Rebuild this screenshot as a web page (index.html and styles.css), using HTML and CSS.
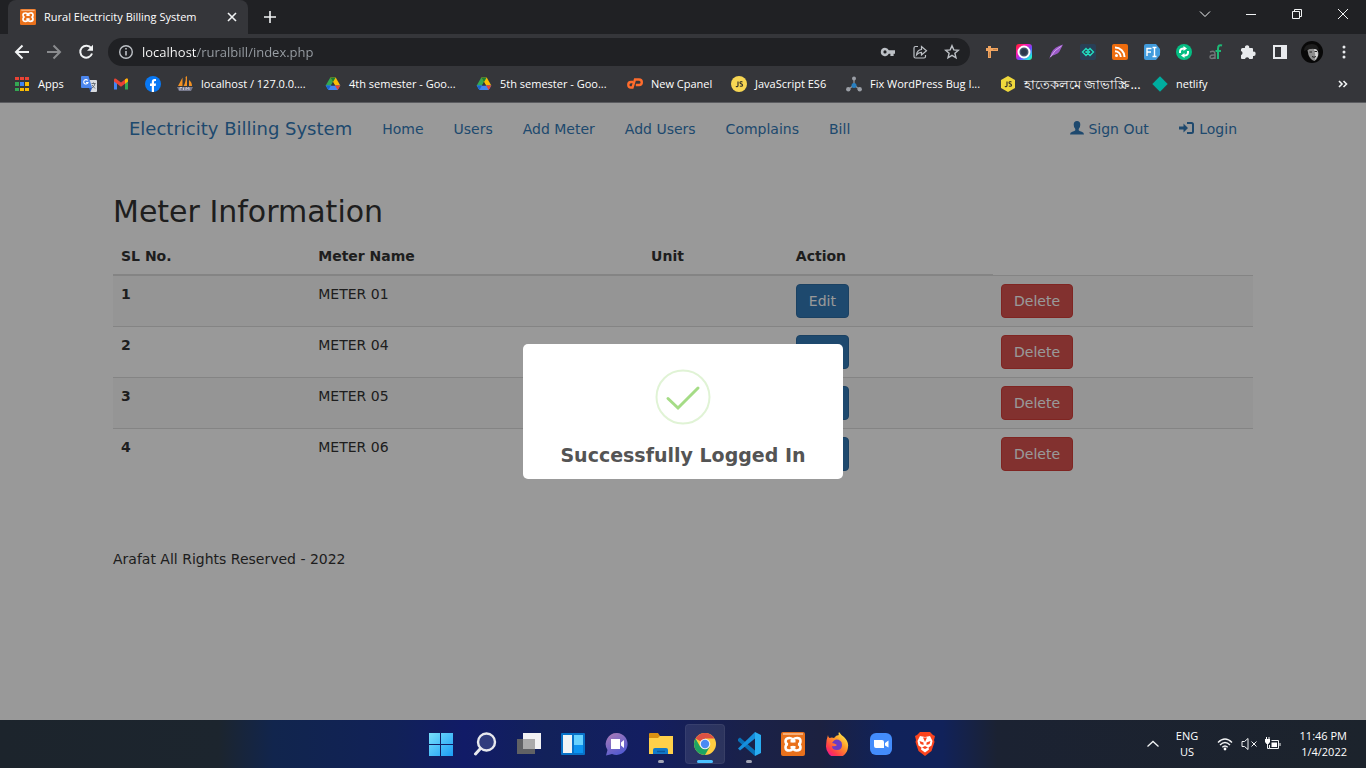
FILE: index.html
```html
<!DOCTYPE html>
<html lang="en">
<head>
<meta charset="utf-8">
<meta name="viewport" content="width=device-width, initial-scale=1">
<title>Rural Electricity Billing System</title>
<link rel="stylesheet" href="styles.css">
</head>
<body>
<svg class="sprite" aria-hidden="true">
  <symbol id="xampp" viewBox="0 0 24 24">
    <rect width="24" height="24" rx="2" fill="#e9711c"/><path d="M2 1h20v2H2z" fill="#f5ad78"/>
    <path d="M12 8q-1-2-3.500-2Q4.500 6 4.500 9T7 12.300q-2.500 0-2.500 3.200t4 3q2.500 0 3.500-2.200 1 2.200 3.500 2.200 4 0 4-3T17 12.300q2.500 0 2.500-3.300t-4-3Q13 6 12 8z" fill="none" stroke="#fff" stroke-width="2.600"/>
    <path d="M9.500 8v2.500h5V8M9.500 16.500V14h5v2.500" fill="#fff"/>
  </symbol>
  <symbol id="drive" viewBox="0 0 16 16">
    <path d="M5.300 1.500 8 6.100 3.400 14 .7 9.500z" fill="#34a853"/>
    <path d="M10.700 1.500 15.300 9.500H10L5.300 1.500z" fill="#fbbc04"/><path d="M5.300 1.500h5.400L8 6.100z" fill="#188038"/>
    <path d="M.7 9.500h14.600L12.700 14H3.400z" fill="#4285f4"/><path d="M.7 9.500H6L3.400 14z" fill="#1967d2"/><path d="M10 9.500h5.300L12.700 14z" fill="#ea4335"/>
    <path d="m8 6.100 2 3.400H6z" fill="#35363a"/>
  </symbol>
</svg>

<div class="screen">
  <header class="browser">
    <div class="tabstrip">
      <div class="tab">
        <svg class="icon16"><use href="#xampp"/></svg>
        <span class="tab-title">Rural Electricity Billing System</span>
        <button class="tab-close" aria-label="Close tab"><svg width="10" height="10" viewBox="0 0 10 10" class="line"><path d="m1 1 8 8M9 1 1 9" stroke-width="1.600"/></svg></button>
      </div>
      <button class="tool" aria-label="New tab"><svg width="14" height="14" viewBox="0 0 14 14" class="line"><path d="M7 1v12M1 7h12" stroke-width="1.600"/></svg></button>
      <div class="window-controls">
        <button aria-label="Search tabs"><svg width="12" height="12" viewBox="0 0 12 12" class="line"><path d="m1 3.500 5 5 5-5"/></svg></button>
        <button aria-label="Minimize"><svg width="12" height="12" viewBox="0 0 12 12" class="line"><path d="M1 6.500h10"/></svg></button>
        <button aria-label="Restore"><svg width="12" height="12" viewBox="0 0 12 12" class="line"><path d="M1.500 3.500h7v7h-7zM3.500 3.500v-2h7v7h-2"/></svg></button>
        <button aria-label="Close"><svg width="12" height="12" viewBox="0 0 12 12" class="line"><path d="m1 1 10 10M11 1 1 11"/></svg></button>
      </div>
    </div>

    <div class="toolbar">
      <button class="tool" aria-label="Back"><svg width="16" height="16" viewBox="0 0 16 16" class="line bold"><path d="M15 8H2M8.500 1.500 2 8l6.500 6.500"/></svg></button>
      <button class="tool dim" aria-label="Forward"><svg width="16" height="16" viewBox="0 0 16 16" class="line bold"><path d="M1 8h13M7.500 1.500 14 8l-6.500 6.500"/></svg></button>
      <button class="tool" aria-label="Reload"><svg width="16" height="16" viewBox="0 0 16 16" class="line bold"><path d="M13.200 4.200A6 6 0 1 0 14 9.500"/><path d="M15 .8v6H9z" fill="#f1f3f4" stroke="none"/></svg></button>
      <div class="omnibox">
        <svg width="16" height="16" viewBox="0 0 16 16" class="line muted"><circle cx="8" cy="8" r="6.300" stroke-width="1.400"/><path d="M8 7v4.500M8 4v1.600" stroke-width="1.600"/></svg>
        <input class="address" type="text" value="localhost/ruralbill/index.php" aria-label="Address">
        <button class="tool" aria-label="Passwords"><svg width="16" height="16" viewBox="0 0 16 16"><path fill="#bdc1c6" fill-rule="evenodd" d="M5 3.700a4.200 4.200 0 0 1 3.800 2.500H15v3.500h-1.400V12h-3.200V9.700H8.800A4.200 4.200 0 1 1 5 3.700zm0 2.600a1.600 1.600 0 1 0 0 3.200 1.600 1.600 0 0 0 0-3.200z"/></svg></button>
        <button class="tool" aria-label="Share"><svg width="16" height="16" viewBox="0 0 16 16" class="line muted"><path d="M6 2.500H3.500Q2 2.500 2 4v8.500Q2 14 3.500 14h8.500q1.500 0 1.500-1.500V11M4.500 11q.5-5 5-5.500V2.500l5 4.300-5 4.200V8.300Q6.500 8.300 4.500 11z" stroke-width="1.200"/></svg></button>
        <button class="tool" aria-label="Bookmark"><svg width="16" height="16" viewBox="0 0 16 16" class="line muted"><path d="m8 1.700 1.800 4.200 4.600.4-3.500 3 1.100 4.500L8 11.400l-4 2.400 1.100-4.500-3.500-3 4.600-.4z" stroke-width="1.400"/></svg></button>
      </div>
      <button class="tool" aria-label="Page ruler"><svg width="16" height="16" viewBox="0 0 16 16"><path d="M2 4h12v3H7v7H4V7H2z" fill="#f0a561"/><path d="M4 2h3v2H4z" fill="#f0a561"/><path d="M9 5.500h4M5.500 8v5" stroke="#c98448"/></svg></button>
      <button class="tool" aria-label="Screen capture"><svg width="16" height="16" viewBox="0 0 16 16"><defs><linearGradient id="cap" x1="0" y1="0" x2="1" y2="1"><stop offset="0" stop-color="#f22"/><stop offset=".35" stop-color="#ff15b5"/><stop offset=".6" stop-color="#6a4bff"/><stop offset=".85" stop-color="#1de6e0"/><stop offset="1" stop-color="#52e072"/></linearGradient></defs><rect width="16" height="16" rx="3" fill="url(#cap)"/><circle cx="8" cy="8" r="5.500" fill="#42526a" stroke="#fff" stroke-width="2"/><circle cx="8" cy="8" r="3" fill="#2b384b"/></svg></button>
      <button class="tool" aria-label="Feather"><svg width="16" height="16" viewBox="0 0 16 16"><path d="M15 .5Q6 3 3.500 8.500L1.200 15l2.300-3Q11 10 12.500 5.500z" fill="#9b59c7"/><path d="M13.500 2Q6 6 2.500 13" stroke="#d3a8ee" fill="none"/></svg></button>
      <button class="tool" aria-label="Code inspector"><svg width="16" height="16" viewBox="0 0 16 16"><rect width="16" height="16" rx="2" fill="#293f55"/><path d="m6 4.500-3.500 3.500L6 11.500 9.500 8zM10 4.500 6.500 8l3.500 3.500L13.500 8z" fill="none" stroke="#22dfc0" stroke-width="1.300"/><path d="M5 8h6" stroke="#22dfc0" stroke-dasharray="2 1"/></svg></button>
      <button class="tool" aria-label="RSS"><svg width="16" height="16" viewBox="0 0 16 16"><rect width="16" height="16" rx="2" fill="#ee6c0d"/><circle cx="4.500" cy="11.500" r="1.500" fill="#fff"/><path d="M3 7.200a5.800 5.800 0 0 1 5.800 5.800M3 3.500A9.500 9.500 0 0 1 12.500 13" fill="none" stroke="#fff" stroke-width="2"/></svg></button>
      <button class="tool" aria-label="Font finder"><svg width="16" height="16" viewBox="0 0 16 16"><path d="M2 0h10l4 5v6l-4 5H2q-2 0-2-2V2q0-2 2-2z" fill="#419bdc"/><path d="M3 12V4.500h4.500M3 8h4M8.500 3.500h4M8.500 12.500h4M10.500 3.500v9" fill="none" stroke="#fff" stroke-width="1.400"/></svg></button>
      <button class="tool" aria-label="Sync"><svg width="16" height="16" viewBox="0 0 16 16"><circle cx="8" cy="8" r="8" fill="#05bd83"/><path d="M4 9V7.500q0-3 4-3M12 7v1.500q0 3-4 3" fill="none" stroke="#fff" stroke-width="2"/><path d="M7.500 2v5L11 4.500zM8.500 14V9L5 11.500z" fill="#fff"/></svg></button>
      <button class="tool" aria-label="Autofill"><svg width="16" height="16" viewBox="0 0 16 16" fill="none"><path d="M2 8q5-2 5 2v5M7 11q-5-.5-5 2t5 .5" stroke="#737679" stroke-width="1.500"/><path d="M14 1.500q-4-1.500-4 3.500v10M7.500 7H13" stroke="#1eb976" stroke-width="2"/></svg></button>
      <button class="tool" aria-label="Extensions"><svg width="16" height="16" viewBox="0 0 16 16"><path fill="#e8eaed" d="M2.500 4H5a2.200 2.200 0 1 1 4.200 0H12q1 0 1 1v2.700a2.200 2.200 0 1 1 0 4.300v2q0 1-1 1H9.300a2.200 2.200 0 0 0-4.300 0H2q-1 0-1-1v-2.800a2.200 2.200 0 0 0 0-4.200V5.500Q1 4 2.500 4z"/></svg></button>
      <button class="tool" aria-label="Side panel"><svg width="16" height="16" viewBox="0 0 16 16"><path fill="#e8eaed" fill-rule="evenodd" d="M1 1h14v14H1zm2 2v10h6V3z"/></svg></button>
      <button class="tool" aria-label="Profile"><svg width="22" height="22" viewBox="0 0 22 22"><circle cx="11" cy="11" r="11" fill="#080808"/><path d="M6.500 9q4-3 9.500-.5l1.500 3.500q0 5-4 8-4-1-6-6z" fill="#8d8d8d"/><path d="M13 8q3 0 3.500 2l.5 4.500-3 4.500q1-6-1-11z" fill="#d2d2d2"/><path d="M3 10q0-7 8-7 6 0 7 6-8-3-15 1z" fill="#1d1d1d"/><path d="M8.500 11h2.500M13.500 10.500H16M11 15.500q2 1.500 4 0" stroke="#202020" fill="none"/></svg></button>
      <button class="tool" aria-label="Menu"><svg width="16" height="16" viewBox="0 0 16 16" fill="#e8eaed"><circle cx="8" cy="3" r="1.500"/><circle cx="8" cy="8" r="1.500"/><circle cx="8" cy="13" r="1.500"/></svg></button>
    </div>

    <nav class="bookmarks" aria-label="Bookmarks">
      <a href="#"><svg class="icon16" viewBox="0 0 16 16"><path d="M1 1h4v3H1zM6 1h4v3H6zM11 1h4v3h-4z" fill="#ea4335"/><path d="M1 6h4v4H1z" fill="#34a853"/><path d="M6 6h4v4H6z" fill="#4285f4"/><path d="M11 6h4v4h-4z" fill="#fbbc04"/><path d="M1 12h4v3H1z" fill="#34a853"/><path d="M6 12h4v3H6zM11 12h4v3h-4z" fill="#fbbc04"/></svg><span>Apps</span></a>
      <a href="#" aria-label="Translate"><svg class="icon16" viewBox="0 0 16 16"><path d="M7 4h8q1 0 1 1v10q0 1-1 1H9.500z" fill="#d9dce0"/><path d="M1 0h6.500l3.700 12H1q-1 0-1-1V1q0-1 1-1z" fill="#4c86ed"/><path d="m8 12 3 0-1.500 4z" fill="#2956b2"/><path d="M6.700 4.500A2.200 2.200 0 1 0 7 6.500H5" stroke="#fff" fill="none" stroke-width="1.100"/><path d="M10.500 7.500h4M12.500 6.500v1M14 7.500q-.5 3-3 4.500M11 9l3 3.500" stroke="#697078" fill="none"/></svg></a>
      <a href="#" aria-label="Gmail"><svg class="icon16" viewBox="0 0 16 16"><path d="M1 4v9.500h3V6z" fill="#4285f4"/><path d="M12 6v7.500h3V4z" fill="#34a853"/><path d="M1 5.500V4q0-2 2-1.300L8 6.500l5-3.800Q15 2 15 4v1.500l-7 5.200z" fill="#ea4335"/><path d="M12 3.500 13 2.700Q15 2 15 4v1.500l-3 2.200z" fill="#fbbc04"/></svg></a>
      <a href="#" aria-label="Facebook"><svg class="icon16" viewBox="0 0 16 16"><circle cx="8" cy="8" r="8" fill="#0878f4"/><path d="M6.800 16V10H5V7.500h1.800V6Q6.800 3 9.500 3H11v2H9.800Q9 5 9 6.200v1.300h2L10.700 10H9v6z" fill="#fff"/></svg></a>
      <a href="#"><svg class="icon16" viewBox="0 0 16 16"><path d="M5.500 1.500V10H1zM10 0v10H6.500Q9.500 5 8.500 1zM12 4q3 2 3 6h-3z" fill="#f29122"/><path d="M0 11h16l-2 4H2z" fill="#77798c"/><path d="M3 14v-2.500h2M6.500 11.500V14M9 14v-2.500l1.500 1 1.500-1V14" fill="none" stroke="#d6d6df" stroke-width=".8"/></svg><span>localhost / 127.0.0....</span></a>
      <a href="#"><svg class="icon16"><use href="#drive"/></svg><span>4th semester - Goo...</span></a>
      <a href="#"><svg class="icon16"><use href="#drive"/></svg><span>5th semester - Goo...</span></a>
      <a href="#"><svg class="icon16" viewBox="0 0 16 16" fill="none" stroke="#ff6c2c" stroke-width="2.400"><path d="M6 6H4Q1.300 6 1.300 8.800T4 11.500H5.500L8 3.500h4q2.800 0 2.800 2.700T12 9H8.800"/></svg><span>New Cpanel</span></a>
      <a href="#"><svg class="icon16" viewBox="0 0 16 16"><circle cx="8" cy="8" r="8" fill="#f7d653"/><path d="M7 5.500v4q0 1.500-2.200 1M11.500 6q-2.500-.8-2.500.7 0 .8 1.300 1.200 1.200.4 1.200 1.300 0 1.600-2.700.8" fill="none" stroke="#38352a" stroke-width="1.200"/></svg><span>JavaScript ES6</span></a>
      <a href="#"><svg class="icon16" viewBox="0 0 16 16"><path d="M8 3v6M8 9l-5 4M8 9l5 4" stroke="#8e9299" stroke-width="1.300"/><g fill="#9b9fa6"><circle cx="8" cy="2.500" r="2"/><circle cx="2.300" cy="13.200" r="2.200"/><circle cx="13.700" cy="13.200" r="2.200"/></g><circle cx="8" cy="9.500" r="2.500" fill="#287fc0"/></svg><span>Fix WordPress Bug I...</span></a>
      <a href="#"><svg class="icon16" viewBox="0 0 16 16"><path d="m8 0 7 4v8l-7 4-7-4V4z" fill="#efd83c"/><path d="M7 5.500v4q0 1.500-2.200 1M11.500 6q-2.500-.8-2.500.7 0 .8 1.300 1.200 1.200.4 1.200 1.300 0 1.600-2.700.8" fill="none" stroke="#38352a" stroke-width="1.200"/></svg><span class="bengali" lang="bn">হাতেকলমে জাভাস্ক্রি...</span></a>
      <a href="#"><svg class="icon16" viewBox="0 0 16 16"><path d="m8 .3 7.700 7.700L8 15.700.3 8z" fill="#00ad9f"/></svg><span>netlify</span></a>
      <button class="tool more" aria-label="More bookmarks"><svg width="10" height="8" viewBox="0 0 10 8" class="line"><path d="m1 1 3 3-3 3M5.500 1l3 3-3 3" stroke-width="1.600"/></svg></button>
    </nav>
  </header>

  <main class="page">
    <div class="container">
      <nav class="navbar">
        <a class="brand" href="#">Electricity Billing System</a>
        <a href="#">Home</a><a href="#">Users</a><a href="#">Add Meter</a><a href="#">Add Users</a><a href="#">Complains</a><a href="#">Bill</a>
        <a class="push" href="#"><svg width="14" height="14" viewBox="0 0 14 14" fill="currentColor"><path d="M7 0q3.300 0 3.300 3.700 0 2.800-1.600 4.300v1.300q.3.700 3 1.500Q14 11.500 14 13.500H0Q0 11.500 2.300 10.800q2.700-.8 3-1.500V8Q3.700 6.500 3.700 3.700 3.700 0 7 0z"/></svg> Sign Out</a>
        <a href="#"><svg width="16" height="14" viewBox="0 0 16 14"><path d="M0 5.500h4.500V2.500L9 7 4.500 11.500V8.500H0z" fill="currentColor"/><path d="M8 2h4.500q1.500 0 1.500 1.500v7q0 1.500-1.500 1.500H8" fill="none" stroke="currentColor" stroke-width="2"/></svg> Login</a>
      </nav>

      <h2>Meter Information</h2>
      <table class="meters">
        <colgroup><col class="c-sl"><col class="c-name"><col class="c-unit"><col class="c-edit"><col class="c-del"></colgroup>
        <thead><tr><th>SL No.</th><th>Meter Name</th><th>Unit</th><th>Action</th></tr></thead>
        <tbody>
          <tr><th scope="row">1</th><td>METER 01</td><td></td><td><button class="btn edit">Edit</button></td><td><button class="btn delete">Delete</button></td></tr>
          <tr><th scope="row">2</th><td>METER 04</td><td></td><td><button class="btn edit">Edit</button></td><td><button class="btn delete">Delete</button></td></tr>
          <tr><th scope="row">3</th><td>METER 05</td><td></td><td><button class="btn edit">Edit</button></td><td><button class="btn delete">Delete</button></td></tr>
          <tr><th scope="row">4</th><td>METER 06</td><td></td><td><button class="btn edit">Edit</button></td><td><button class="btn delete">Delete</button></td></tr>
        </tbody>
      </table>
      <footer class="copyright">Arafat All Rights Reserved - 2022</footer>
    </div>

    <div class="overlay">
      <div class="modal" role="dialog" aria-labelledby="modal-title">
        <svg width="56" height="56" viewBox="0 0 56 56" fill="none" stroke="#a5dc86"><circle cx="28" cy="28" r="26.500" stroke-width="2" stroke-opacity=".35"/><path d="m13 29.500 10 9.500 20-20" stroke-width="3" stroke-linecap="round"/></svg>
        <h3 id="modal-title">Successfully Logged In</h3>
      </div>
    </div>
  </main>

  <footer class="taskbar">
    <div class="apps">
      <button aria-label="Start"><svg width="24" height="24" viewBox="0 0 24 24"><defs><linearGradient id="win" x1="0" y1="0" x2="1" y2="1"><stop offset="0" stop-color="#79e0fb"/><stop offset="1" stop-color="#1b9df5"/></linearGradient></defs><path d="M0 1h11v11H0zM12 1h12v11H12zM0 13h11v11H0zM12 13h12v11H12z" fill="url(#win)"/></svg></button>
      <button aria-label="Search"><svg width="24" height="24" viewBox="0 0 24 24"><circle cx="13.500" cy="10" r="8.500" fill="#303c7d" stroke="#e8e9ee" stroke-width="2.400"/><path d="m7.500 16.500-5 5.500" stroke="#e8e9ee" stroke-width="3" stroke-linecap="round"/></svg></button>
      <button aria-label="Task view"><svg width="24" height="24" viewBox="0 0 24 24"><path d="M6 1h18v16H6z" fill="#f2f2f3"/><path d="M0 7h18v15H0z" fill="#606164"/><path d="M6 7h12v10H6z" fill="#aaa"/></svg></button>
      <button aria-label="Widgets"><svg width="24" height="24" viewBox="0 0 24 24"><rect y="1" width="24" height="22" rx="1" fill="#0872c8"/><path d="M2 3h9v18H2z" fill="#f0f3f5"/><path d="M13 3h9v10h-9z" fill="#67d2ff"/><path d="M13 13h9v8h-9z" fill="#0b94f1"/></svg></button>
      <button aria-label="Chat"><svg width="24" height="24" viewBox="0 0 24 24"><defs><linearGradient id="chat" x1="0" y1="0" x2=".5" y2="1"><stop offset="0" stop-color="#ae7db5"/><stop offset="1" stop-color="#555bd0"/></linearGradient></defs><path d="M12 1a11 11 0 1 1-5 21L1 23.500 2.500 18A11 11 0 0 1 12 1z" fill="url(#chat)"/><path d="M6 7h9v10H6zM16 10.500l3-2.500v8l-3-2.500z" fill="#fff"/></svg></button>
      <button class="running" aria-label="File Explorer"><svg width="24" height="24" viewBox="0 0 24 24"><path d="M1 1h8l2 3H24v9H0V2q0-1 1-1z" fill="#d99012"/><path d="M0 6h9l2-2h13v18H0z" fill="#ffd04a"/><path d="M4 22v-4q0-2 2-2h11q2 0 2 2v4z" fill="#1179ca"/><path d="M8 19.500h8" stroke="#0b579d" stroke-width="1.500"/></svg></button>
      <button class="active" aria-label="Chrome"><svg width="24" height="24" viewBox="0 0 24 24"><circle cx="12" cy="12" r="11" fill="#ffcd40"/><path d="M12 12 2.500 6.500A11 11 0 0 1 21.500 6.500H12z" fill="#dd5144"/><path d="M2.500 6.500a11 11 0 0 0 9.500 16.500l4.800-8.300L12 12l-4.800 2.700z" fill="#1da462"/><circle cx="12" cy="12" r="5.300" fill="#f1f1f1"/><circle cx="12" cy="12" r="4.200" fill="#4a8af4"/></svg></button>
      <button class="running" aria-label="Visual Studio Code"><svg width="24" height="24" viewBox="0 0 24 24"><path d="m1 7 2-1.500 15 13V24L1 9z" fill="#0871b8"/><path d="M1 16.500 18 0v6.500L3 18.500z" fill="#168fdd"/><path d="m18 0 6 3v18l-6 3z" fill="#29adf2"/></svg></button>
      <button aria-label="XAMPP"><svg width="24" height="24"><use href="#xampp"/></svg></button>
      <button aria-label="Firefox"><svg width="24" height="24" viewBox="0 0 24 24"><defs><linearGradient id="fox" x1="1" y1="0" x2=".2" y2="1"><stop offset=".1" stop-color="#fff44f"/><stop offset=".45" stop-color="#ff9728"/><stop offset=".8" stop-color="#ff3b4b"/><stop offset="1" stop-color="#ef1499"/></linearGradient></defs><path d="M3 3q0 2 1.500 3Q7 5 9 6q2-3 5-3-1-1 0-3 2 3 5 5 5 5 4 10a11 11 0 0 1-22-1Q1 8 3 3z" fill="url(#fox)"/><path d="M11 7.500q6 0 6 5.500 0 5-5 5-5 0-5-4 3 1 5-1-3-2-5-2 2-3.500 4-3.500z" fill="#6b3bc4"/></svg></button>
      <button aria-label="Zoom"><svg width="24" height="24" viewBox="0 0 24 24"><rect x="1" y="1" width="22" height="22" rx="6" fill="#438cfb"/><path d="M5 8h8q2 0 2 2v6H7q-2 0-2-2zM16 11l3.500-2.500v7L16 13.500z" fill="#fff"/></svg></button>
      <button aria-label="Brave"><svg width="24" height="24" viewBox="0 0 24 24"><path d="M7 0h10l3 3 2 1-1 4 .5 2-3 9-6.500 5-6.500-5-3-9L3 8 2 4l2-1z" fill="#fb441e"/><path d="m7 4 5 1 5-1 2.500 5-1 4.500-3 2 .5 2-4 3-4-3 .5-2-3-2-1-4.500z" fill="#fff"/><path d="m6.500 9 4 1.500v2.500L7.500 12zM17.500 9l-4 1.500v2.500l3-1zM9 15.500l3-1.500 3 1.500-3 1.500zM10 5.500h4L12 10z" fill="#fb441e"/></svg></button>
    </div>
    <div class="tray">
      <button class="chevron" aria-label="Show hidden icons"><svg width="14" height="14" viewBox="0 0 14 14" class="line"><path d="m1.500 9.500 5.500-5 5.500 5" stroke-width="1.300"/></svg></button>
      <button class="lang">ENG<br>US</button>
      <button class="status" aria-label="Quick settings">
        <svg width="16" height="16" viewBox="0 0 16 16" class="line"><path d="M1 6.500q7-7 14 0M3 9q5-5 10 0M5.300 11.300q2.700-2.600 5.400 0" stroke-width="1.400"/><circle cx="8" cy="13" r="1.400" fill="#fff" stroke="none"/></svg>
        <svg width="16" height="16" viewBox="0 0 16 16" class="line"><path d="M1 5.500h2.500L7 2.500v11l-3.500-3H1zM10.500 5.500l5 5M15.500 5.500l-5 5"/></svg>
        <svg width="16" height="16" viewBox="0 0 16 16" class="line"><path d="M6.500 4.500h7v8h-9V9M15 7v3"/><path d="M6.500 6.500H12v4.500H6.500zM0 3h5v3L3.500 8h-2L0 6zM1 1h1v2H1zM3.500 1h1v2h-1z" fill="#fff" stroke="none"/><path d="M2.500 8v4.500h2"/></svg>
      </button>
      <button class="clock">11:46 PM<br>1/4/2022</button>
    </div>
  </footer>
</div>
</body>
</html>
```
FILE: styles.css
```css
* { box-sizing: border-box; }
body { margin: 0; font: 14px/20px Verdana, "DejaVu Sans", sans-serif; color: #333; background: #fff; }
button { margin: 0; padding: 0; border: 0; background: none; color: inherit; font: inherit; cursor: pointer; }
a { color: #337ab7; text-decoration: none; }
svg { flex: none; }
.sprite { display: none; }
.icon16 { width: 16px; height: 16px; }
.line { fill: none; stroke: #f1f3f4; }
.bold { stroke-width: 2; }
.muted { stroke: #bdc1c6; }
.dim { opacity: .45; }

.screen { min-height: 100vh; display: grid; grid-template-rows: auto 1fr auto; }

.browser { background: #35363a; color: #fff; font: 11px/16px "Open Sans", sans-serif; border-bottom: 1px solid #5b5c60; }
.tabstrip { display: flex; align-items: stretch; height: 34px; padding-left: 8px; background: #202124; }
.tab { display: flex; align-items: center; gap: 8px; width: 240px; padding: 0 8px 0 12px; background: #35363a; border-radius: 8px 8px 0 0; }
.tab-title { flex: 1; white-space: nowrap; overflow: hidden; }
.tab-close { display: grid; place-items: center; width: 16px; height: 16px; }
.tabstrip > .tool { width: 44px; height: 34px; }
.window-controls { display: flex; margin-left: auto; }
.window-controls button { display: grid; place-items: center; width: 46px; height: 28px; }
.tool { display: grid; place-items: center; flex: none; width: 32px; height: 28px; }
.toolbar { display: flex; align-items: center; padding: 4px 6px 0; }
.omnibox { display: flex; align-items: center; flex: 1; min-width: 0; height: 28px; margin: 0 6px; padding: 0 2px 0 10px; background: #202124; border-radius: 14px; }
.address { flex: 1; min-width: 0; margin-left: 8px; padding: 0; border: 0; outline: 0; font: 13px/20px "Open Sans", sans-serif; -webkit-text-fill-color: transparent; background: linear-gradient(90deg, #fff 55px, #9aa0a6 55px); -webkit-background-clip: text; background-clip: text; }
.bookmarks { display: grid; grid-template-columns: 67px 32px 32px 32px 148px 151px 151px 104px 115px 154px 152px 81px 1fr; align-items: center; height: 36px; padding: 0 7px 0 6px; }
.bookmarks a { display: flex; align-items: center; gap: 8px; padding-left: 8px; color: #fff; white-space: nowrap; }
.bengali { font-size: 13px; }
.more { justify-self: end; }

.page { position: relative; background: #fff; }
.container { max-width: 1170px; margin: 0 auto; padding: 0 15px; }
.navbar { display: flex; align-items: center; height: 52px; margin-bottom: 40px; padding: 0 1px; }
.navbar a { padding: 0 15px; white-space: nowrap; }
.navbar svg { vertical-align: -1px; }
.navbar .brand { font-size: 18px; }
.navbar .push { margin-left: auto; }
h2 { margin: 0 0 10px; font-size: 30px; line-height: 33px; font-weight: 400; }
.meters { width: 100%; table-layout: fixed; border-collapse: collapse; margin-bottom: 20px; }
.c-sl { width: 17.300%; }
.c-name { width: 29.200%; }
.c-unit { width: 12.700%; }
.c-edit { width: 18%; }
.c-del { width: 22.800%; }
.meters th, .meters td { padding: 8px; text-align: left; vertical-align: top; border-top: 1px solid #ddd; }
.meters thead th { border-top: 0; border-bottom: 2px solid #ddd; }
.meters tbody tr:nth-child(odd) { background: #f9f9f9; }
.btn { display: block; padding: 6px 12px; border: 1px solid; border-radius: 4px; color: #fff; }
.edit { background: #337ab7; border-color: #2e6da4; }
.delete { background: #d9534f; border-color: #d43f3a; }
.copyright { padding: 50px 0; }

.overlay { position: absolute; inset: 0; display: grid; place-items: center; background: rgba(0, 0, 0, .4); }
.modal { display: flex; flex-direction: column; align-items: center; gap: 16px; width: 320px; padding: 25px 16px 9px; background: #fff; border-radius: 5px; }
.modal h3 { margin: 0; font-size: 19px; line-height: 29px; color: #545454; white-space: nowrap; }

.taskbar { display: grid; grid-template-columns: 1fr auto 1fr; align-items: center; height: 48px; color: #fff; font: 11px/16px "Open Sans", sans-serif; background: linear-gradient(90deg, #1c242c 0, #1c252e 16%, #11254d 20%, #112158 29%, #111b67 34%, #12215a 40%, #131e61 47%, #1a2148 55%, #1c2140 60%, #10225a 65%, #11225a 69%, #1b2232 73%, #1c232c 100%); }
.apps { grid-column: 2; display: flex; gap: 4px; }
.apps button { position: relative; display: grid; place-items: center; width: 40px; height: 40px; border-radius: 4px; }
.apps .active { background: rgba(255, 255, 255, .09); box-shadow: inset 0 0 0 1px rgba(255, 255, 255, .06); }
.running::after, .active::after { content: ""; position: absolute; bottom: 1px; left: 17px; width: 6px; height: 3px; border-radius: 2px; background: #a1a4b5; }
.active::after { left: 12px; width: 16px; background: #4cc2ff; }
.tray { justify-self: end; display: flex; align-items: center; padding-right: 19px; }
.tray button { display: flex; align-items: center; justify-content: center; }
.tray .chevron { width: 32px; }
.tray .lang { width: 36px; }
.tray .status { gap: 8px; margin: 0 12px; }
.tray .clock { width: 54px; justify-content: flex-end; text-align: right; white-space: nowrap; }
```
